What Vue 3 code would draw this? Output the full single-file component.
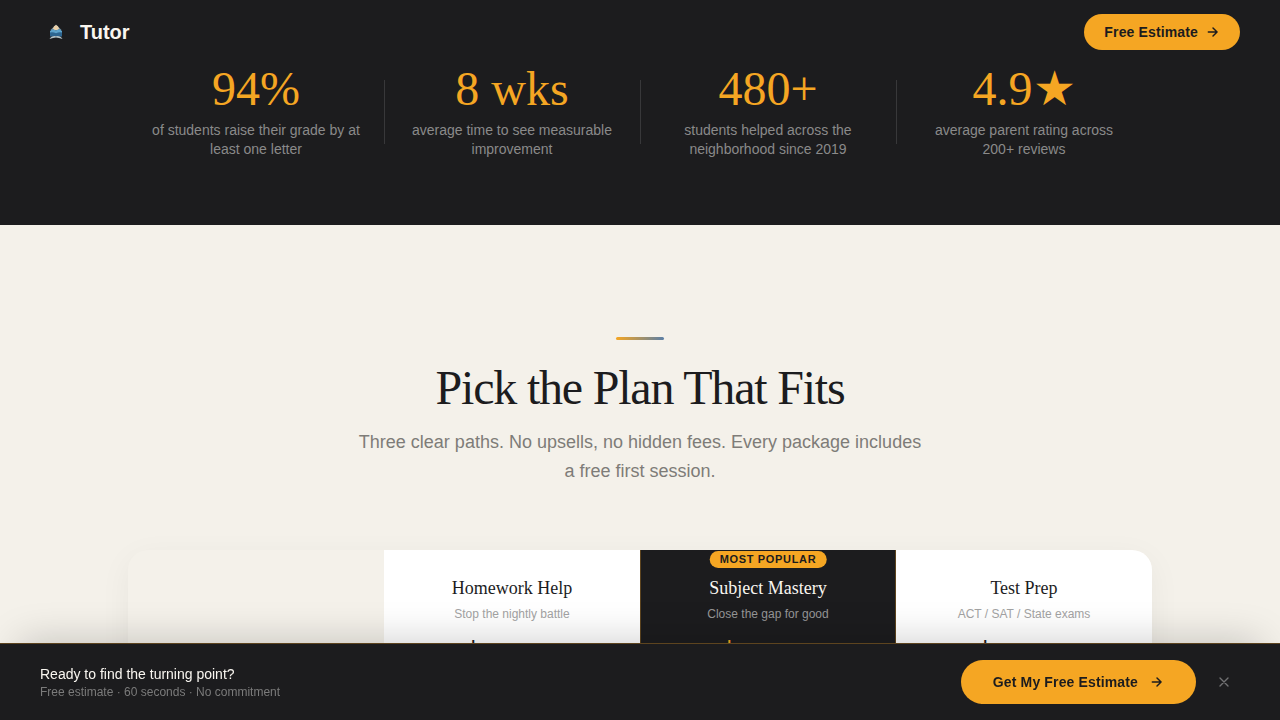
<script setup>
const stats = [
  { value: '94%', label: 'of students raise their grade by at least one letter' },
  { value: '8 wks', label: 'average time to see measurable improvement' },
  { value: '480+', label: 'students helped across the neighborhood since 2019' },
  { value: '4.9★', label: 'average parent rating across 200+ reviews' },
]
const plans = [
  { name: 'Homework Help', note: 'Stop the nightly battle' },
  { name: 'Subject Mastery', note: 'Close the gap for good', featured: true },
  { name: 'Test Prep', note: 'ACT / SAT / State exams' },
]
</script>

<template>
  <div class="page">
    <header class="top">
      <a class="brand" href="#">
        <span class="mark">
          <svg width="16" height="18" viewBox="0 0 16 18" aria-hidden="true">
            <path d="M8 1.500 2.500 7h11z" fill="#6f8a9c" />
            <path d="M8 2 4.500 6h7z" fill="#e9cfa8" />
            <circle cx="8" cy="5" r="2.500" fill="#e9cfa8" />
            <path d="M2 8q3-2.500 6-.5 3-2 6 .5v3H2z" fill="#5da3cc" />
            <path d="M2 9.500q3-.8 6 .8 3-1.600 6-.8v4H2z" fill="#2d6590" />
            <path d="M1.500 16q2-3.500 6.500-2.800 4.500-.7 6.500 2.800l-3.500-1q-3-1-6 0z" fill="#b5c3c8" />
          </svg>
        </span>
        Tutor
      </a>
      <button class="cta small" type="button">
        Free Estimate
        <svg width="14" height="14" viewBox="0 0 24 24" aria-hidden="true"><path d="M4 12h15M12 5l7 7-7 7" /></svg>
      </button>
    </header>

    <main>
      <section class="stats">
        <div v-for="s in stats" :key="s.value" class="stat">
          <div class="value">{{ s.value }}</div>
          <div class="label">{{ s.label }}</div>
        </div>
      </section>

      <section class="pricing">
        <div class="accent"></div>
        <h2>Pick the Plan That Fits</h2>
        <p class="lead">Three clear paths. No upsells, no hidden fees. Every package includes a free first session.</p>
        <table class="plans">
          <thead>
            <tr>
              <td></td>
              <th v-for="p in plans" :key="p.name" scope="col" :class="{ featured: p.featured }">
                <span v-if="p.featured" class="badge">MOST POPULAR</span>
                <div class="name">{{ p.name }}</div>
                <div class="note">{{ p.note }}</div>
                <div class="price">$</div>
              </th>
            </tr>
          </thead>
        </table>
      </section>
    </main>

    <aside class="bar">
      <div class="pitch">
        <div class="ask">Ready to find the turning point?</div>
        <div class="terms">Free estimate · 60 seconds · No commitment</div>
      </div>
      <button class="cta large" type="button">
        Get My Free Estimate
        <svg width="14" height="14" viewBox="0 0 24 24" aria-hidden="true"><path d="M4 12h15M12 5l7 7-7 7" /></svg>
      </button>
      <button class="close" type="button" aria-label="Dismiss">
        <svg width="16" height="16" viewBox="0 0 24 24" aria-hidden="true"><path d="M6 6l12 12M18 6 6 18" /></svg>
      </button>
    </aside>
  </div>
</template>

<style>
body {
  margin: 0;
  background: #f4f1ea;
}
</style>

<style scoped>
.page {
  height: 100vh;
  overflow: hidden;
  font-family: "Liberation Sans", Arial, sans-serif;
  color: #1c1c1e;
}
.top {
  position: sticky;
  top: 0;
  z-index: 2;
  display: flex;
  align-items: center;
  justify-content: space-between;
  height: 64px;
  padding: 0 40px;
  background: #1c1c1e;
}
.brand {
  display: flex;
  align-items: center;
  gap: 8px;
  color: #f9f6f0;
  font-size: 20px;
  font-weight: 700;
  text-decoration: none;
}
.mark {
  display: grid;
  place-items: center;
  width: 32px;
  height: 32px;
}
.cta {
  display: flex;
  align-items: center;
  border: 0;
  border-radius: 24px;
  background: #f5a623;
  color: #1c1c1e;
  font: 700 14px "Liberation Sans", Arial, sans-serif;
  letter-spacing: 0.01em;
}
.cta svg,
.close svg {
  fill: none;
  stroke: currentColor;
  stroke-width: 2.5;
  stroke-linecap: round;
  stroke-linejoin: round;
}
.close svg {
  stroke-width: 2;
}
.small {
  gap: 8px;
  height: 36px;
  padding: 0 20px;
}
.large {
  gap: 12px;
  height: 44px;
  padding: 0 32px;
}
.stats {
  display: grid;
  grid-template-columns: repeat(4, 1fr);
  padding: 1px 10% 66px;
  background: #1c1c1e;
}
.stat {
  padding: 0 24px;
  text-align: center;
}
.stat:not(:first-child) {
  background: linear-gradient(#38383a, #38383a) left 15px / 1px 64px no-repeat;
}
.value {
  font-family: "Liberation Serif", "Times New Roman", serif;
  font-size: 48px;
  line-height: 48px;
  color: #f5a623;
}
.label {
  margin-top: 8px;
  font-size: 14px;
  line-height: 19px;
  color: #8a8a8a;
}
.pricing {
  padding: 112px 10% 0;
  text-align: center;
}
.accent {
  width: 48px;
  height: 3px;
  margin: 0 auto 24px;
  border-radius: 2px;
  background: linear-gradient(90deg, #f5a623, #5b7fa6);
}
h2 {
  margin: 0;
  font: 400 48px/48px "Liberation Serif", "Times New Roman", serif;
  letter-spacing: -0.025em;
}
.lead {
  max-width: 570px;
  margin: 16px auto 64px;
  font-size: 18px;
  line-height: 29px;
  color: #7e7c78;
}
.plans {
  width: 100%;
  table-layout: fixed;
  border-spacing: 0;
  border-radius: 20px;
  overflow: hidden;
  background: #f4f1ea;
  box-shadow: 0 8px 32px rgba(0, 0, 0, 0.05);
}
.plans td,
.plans th {
  padding: 0;
}
.plans th {
  position: relative;
  height: 200px;
  padding-top: 26px;
  box-sizing: border-box;
  vertical-align: top;
  font-weight: 400;
  background: #fff;
}
.plans .featured {
  background: #1c1c1e;
  border: 1px solid #5d441f;
  border-width: 0 1px;
  color: #f9f6f0;
}
.badge {
  position: absolute;
  top: 1px;
  left: 50%;
  transform: translateX(-50%);
  padding: 0 10px;
  border-radius: 9px;
  background: #f5a623;
  color: #1c1c1e;
  font-size: 11px;
  font-weight: 700;
  line-height: 17px;
  letter-spacing: 0.06em;
  white-space: nowrap;
}
.name {
  font-family: "Liberation Serif", "Times New Roman", serif;
  font-size: 18px;
  line-height: 24px;
}
.note {
  margin-top: 6px;
  font-size: 12px;
  line-height: 16px;
  color: #a3a3a3;
}
.featured .note {
  color: #969696;
}
.price {
  margin-top: 10px;
  padding-right: 78px;
  font-family: "Liberation Serif", "Times New Roman", serif;
  font-size: 48px;
  line-height: 56px;
}
.featured .price {
  color: #f5a623;
}
.bar {
  position: fixed;
  right: 0;
  bottom: 0;
  left: 0;
  z-index: 2;
  display: flex;
  align-items: center;
  gap: 12px;
  padding: 16px 40px;
  border-top: 1px solid #5d441f;
  background: #1c1c1e;
  box-shadow: 0 -20px 40px -20px rgba(0, 0, 0, 0.22);
}
.pitch {
  flex: 1;
  padding-top: 2px;
}
.ask {
  font-size: 14px;
  line-height: 18px;
  color: #f9f6f0;
}
.terms {
  font-size: 12px;
  line-height: 18px;
  color: #7b7b7b;
}
.close {
  display: grid;
  place-items: center;
  width: 32px;
  height: 32px;
  padding: 0;
  border: 0;
  background: none;
  color: #727274;
}
</style>
